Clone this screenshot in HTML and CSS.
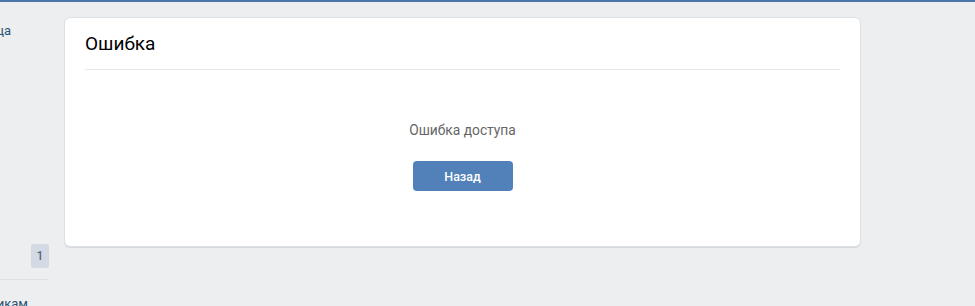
FILE: index.html
```html
<!DOCTYPE html>
<html lang="ru">
<head>
    <meta charset="UTF-8">
    <title>Ошибка</title>
    <link rel="stylesheet" href="styles.css">
</head>
<body>
    <div class="topbar"></div>
    <div class="layout">
        <nav class="sidebar">
            <div class="nav-item first"><span>Моя страница</span></div>
            <div class="nav-item badge-row"><span class="badge">1</span></div>
            <div class="nav-sep"></div>
            <div class="nav-item last"><span>Подписчикам</span></div>
        </nav>
        <main class="page-block">
            <div class="page-head">
                <h2>Ошибка</h2>
            </div>
            <div class="page-body">
                <p class="message">Ошибка доступа</p>
                <button class="btn" type="button">Назад</button>
            </div>
        </main>
    </div>
</body>
</html>
```

FILE: styles.css
```css
body {
    margin: 0;
    background: #edeef0;
    font-family: Roboto, "Open Sans", Arial, sans-serif;
    font-size: 13px;
    color: #000;
    height: 306px;
    overflow: hidden;
}
.topbar {
    height: 2px;
    background: #4a76a8;
}
.layout {
    display: flex;
    gap: 15px;
    padding-top: 15px;
}
.sidebar {
    width: 49px;
    flex-shrink: 0;
    overflow: hidden;
    display: flex;
    flex-direction: column;
}
.nav-item {
    display: flex;
    justify-content: flex-end;
    white-space: nowrap;
    color: #285473;
    font-size: 13px;
}
.nav-item.first {
    padding-right: 38px;
    margin-top: 6px;
}
.badge-row {
    margin-top: 206px;
}
.badge {
    display: flex;
    align-items: center;
    justify-content: center;
    width: 18px;
    height: 24px;
    background: #d3dae3;
    color: #55677d;
    border-radius: 2px;
    font-size: 12px;
    font-weight: 500;
}
.nav-sep {
    width: 48px;
    height: 1px;
    background: #dce1e6;
    margin-top: 11px;
}
.nav-item.last {
    padding-right: 21px;
    margin-top: 16px;
}
.page-block {
    width: 795px;
    height: 228px;
    background: #fff;
    border: 1px solid #dce1e6;
    border-radius: 6px;
    box-shadow: 0 1px 0 0 #d7d8db;
}
.page-head {
    margin: 0 20px;
    height: 51px;
    border-bottom: 1px solid #e7e8ec;
    display: flex;
    align-items: center;
}
.page-head h2 {
    margin: 0;
    font-size: 19px;
    font-weight: 400;
}
.page-body {
    display: flex;
    flex-direction: column;
    align-items: center;
    padding-top: 51px;
}
.message {
    margin: 0;
    color: #656565;
    font-size: 13.8px;
    line-height: 18px;
}
.btn {
    margin-top: 22px;
    width: 100px;
    height: 30px;
    border: 0;
    border-radius: 4px;
    background: #5181b8;
    color: #fff;
    font-family: inherit;
    font-size: 12.5px;
    font-weight: 500;
}
```
